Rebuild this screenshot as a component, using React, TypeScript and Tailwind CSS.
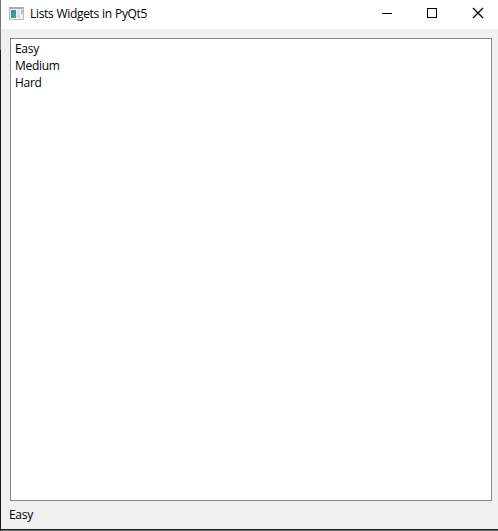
const items = ["Easy", "Medium", "Hard"];

function AppIcon() {
  return (
    <svg width="16" height="14" viewBox="0 0 16 14" shapeRendering="crispEdges" className="-mt-[2px] block">
      <defs>
        <linearGradient id="pane" x1="0" y1="0" x2="1" y2="1">
          <stop offset="0" stopColor="#4a7fae" />
          <stop offset="1" stopColor="#4fa27c" />
        </linearGradient>
      </defs>
      <rect x="0" y="0" width="15" height="13" fill="#b9bcbf" />
      <rect x="0" y="0" width="15" height="2" fill="#a6a9ac" />
      <rect x="1" y="2" width="13" height="10" fill="#eef0f2" />
      <rect x="2" y="3" width="5" height="8" fill="url(#pane)" />
      <rect x="8" y="3" width="3" height="8" fill="#dfe3e8" />
      <rect x="12" y="3" width="2" height="4" fill="#a9cdb9" />
    </svg>
  );
}

export default function App() {
  return (
    <div className="flex h-[531px] w-[498px] overflow-hidden bg-[#f0f0f0] font-['Open_Sans','Noto_Sans',sans-serif] text-[12px] text-black">
      <div className="flex w-px shrink-0 flex-col">
        <div className="h-[50px] bg-[#77777a]" />
        <div className="flex-1 bg-[#1c1c1c]" />
      </div>
      <div className="flex min-w-0 flex-1 flex-col">
        <header className="flex h-[29px] shrink-0 items-center bg-white pl-2">
          <AppIcon />
          <span className="-mt-[2px] ml-[5px] w-[140px] whitespace-nowrap leading-[17px] tracking-[-0.33px] [word-spacing:0.4px]">Lists Widgets in PyQt5</span>
          <svg width="110" height="29" viewBox="0 0 110 29" fill="none" stroke="#000" className="ml-auto mr-[8px] block">
            <path d="M2 13.5H12" />
            <rect x="47.5" y="8.5" width="9" height="9" />
            <path strokeWidth="1.25" d="M93 8L103 18M103 8L93 18" />
          </svg>
        </header>
        <main className="flex flex-1 flex-col pl-[9px] pr-[6px] pt-[9px]">
          <ul className="h-[463px] border border-[#828790] bg-white pl-1 pt-px">
            {items.map((item) => (
              <li key={item} className="h-[17px] leading-[17px] tracking-[-0.3px]">{item}</li>
            ))}
          </ul>
          <div className="-ml-px mt-[5px] leading-[17px] tracking-[-0.3px]">Easy</div>
        </main>
        <div className="h-px shrink-0 bg-[#1c1c1c]" />
        <div className="h-px shrink-0 bg-[#6f7070]" />
      </div>
    </div>
  );
}
